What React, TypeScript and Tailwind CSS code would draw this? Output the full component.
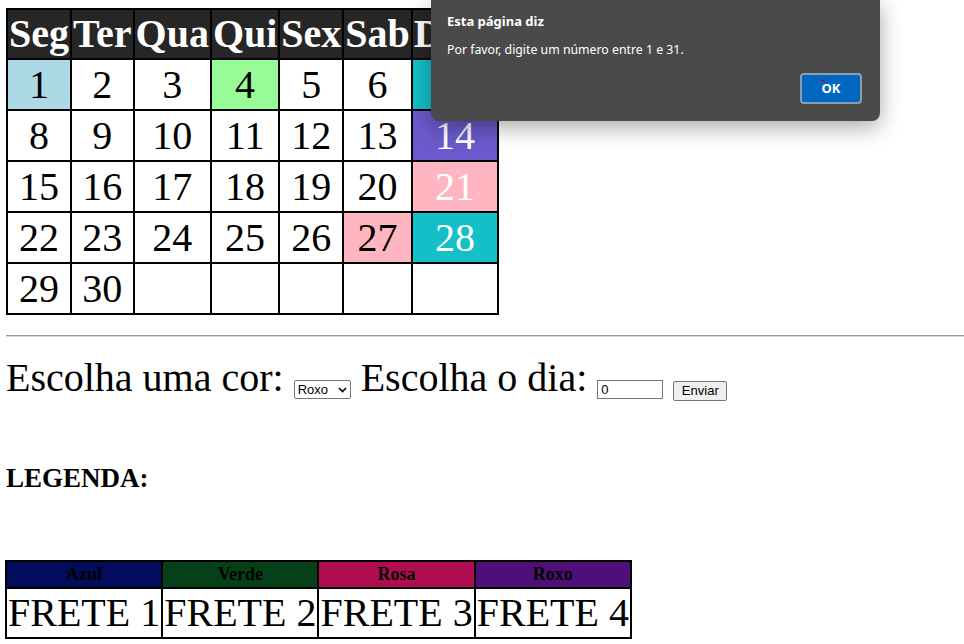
import React from "react";

type Day = { n?: number; bg?: string; fg?: string };

const weekDays = ["Seg", "Ter", "Qua", "Qui", "Sex", "Sab", "Dom"];

const weeks: Day[][] = [
  [
    { n: 1, bg: "bg-[#add8e6]" },
    { n: 2 },
    { n: 3 },
    { n: 4, bg: "bg-[#98fb98]" },
    { n: 5 },
    { n: 6 },
    { n: 7, bg: "bg-[#14bfc7]", fg: "text-white" },
  ],
  [
    { n: 8 },
    { n: 9 },
    { n: 10 },
    { n: 11 },
    { n: 12 },
    { n: 13 },
    { n: 14, bg: "bg-[#6a5acd]", fg: "text-white" },
  ],
  [
    { n: 15 },
    { n: 16 },
    { n: 17 },
    { n: 18 },
    { n: 19 },
    { n: 20 },
    { n: 21, bg: "bg-[#ffb6c1]", fg: "text-white" },
  ],
  [
    { n: 22 },
    { n: 23 },
    { n: 24 },
    { n: 25 },
    { n: 26 },
    { n: 27, bg: "bg-[#ffb6c1]" },
    { n: 28, bg: "bg-[#14bfc7]", fg: "text-white" },
  ],
  [{ n: 29 }, { n: 30 }, {}, {}, {}, {}, {}],
];

const legend = [
  { name: "Azul", bg: "bg-[#030c5b]", frete: "FRETE 1" },
  { name: "Verde", bg: "bg-[#064018]", frete: "FRETE 2" },
  { name: "Rosa", bg: "bg-[#b00c50]", frete: "FRETE 3" },
  { name: "Roxo", bg: "bg-[#4f0f78]", frete: "FRETE 4" },
];

const Calendar = () => (
  <table className="ml-[6px] mt-[8px] text-[40px] leading-[46px]">
    <thead>
      <tr>
        {weekDays.map((d) => (
          <th
            key={d}
            className="border-2 border-black bg-[#262626] p-px font-bold text-white"
          >
            {d}
          </th>
        ))}
      </tr>
    </thead>
    <tbody>
      {weeks.map((week, i) => (
        <tr key={i}>
          {week.map((day, j) => (
            <td
              key={j}
              className={`h-[51px] border-2 border-black p-px text-center ${day.bg ?? "bg-white"} ${day.fg ?? "text-black"}`}
            >
              {day.n}
            </td>
          ))}
        </tr>
      ))}
    </tbody>
  </table>
);

const Controls = () => (
  <p className="mt-[18px] text-[40px] leading-[46px] whitespace-nowrap">
    Escolha uma cor:{" "}
    <span className="inline-flex h-[19px] w-[57px] items-center justify-between rounded-[2px] border border-[#767676] bg-white pl-[3px] pr-[3px] align-[-3px] font-['Liberation_Sans',sans-serif] text-[13px] leading-none">
      Roxo
      <svg width="9" height="6" viewBox="0 0 9 6" fill="none">
        <path d="M1 1l3.5 3.5L8 1" stroke="#000" strokeWidth="1.6" />
      </svg>
    </span>{" "}
    Escolha o dia:{" "}
    <span className="inline-flex h-[19px] w-[66px] items-center border border-[#767676] bg-white pl-[3px] align-[-3px] font-['Liberation_Sans',sans-serif] text-[13px] leading-none">
      0
    </span>{" "}
    <span className="inline-flex h-[20px] w-[54px] items-center justify-center rounded-[2px] border border-[#767676] bg-[#efefef] align-[-4px] font-['Liberation_Sans',sans-serif] text-[13px] leading-none">
      Enviar
    </span>
  </p>
);

const Legend = () => (
  <>
    <h3 className="mt-[62px] text-[27px] font-bold leading-[30px]">LEGENDA:</h3>
    <table className="-ml-px mt-[67px]">
      <thead>
        <tr>
          {legend.map((l) => (
            <th
              key={l.name}
              className={`border-2 border-black p-px text-[18px] font-bold leading-[23px] text-black ${l.bg}`}
            >
              {l.name}
            </th>
          ))}
        </tr>
      </thead>
      <tbody>
        <tr>
          {legend.map((l) => (
            <td
              key={l.name}
              className="border-2 border-black p-px text-[40px] leading-[46px]"
            >
              {l.frete}
            </td>
          ))}
        </tr>
      </tbody>
    </table>
  </>
);

const AlertDialog = () => (
  <div className="absolute left-[431px] top-0 h-[121px] w-[449px] rounded-b-[8px] bg-[#4a4a4a] font-['Noto_Sans',sans-serif] text-white shadow-[0_6px_22px_rgba(0,0,0,0.35)]">
    <div className="pl-[16px] pt-[12px] text-[13px] font-bold leading-[18px]">
      Esta página diz
    </div>
    <div className="mt-[11px] pl-[16px] text-[12.3px] leading-[18px]">
      Por favor, digite um número entre 1 e 31.
    </div>
    <div className="mt-[14px] flex justify-end pr-[18px]">
      <div className="relative flex h-[31px] w-[62px] items-center justify-center rounded-[4px] border-2 border-[#8d9db0] bg-[#0067c0] text-[13px] font-bold">
        OK
        <span className="absolute left-[19px] top-[4px] h-[3px] w-[3px] rounded-full bg-[#e00000]" />
      </div>
    </div>
  </div>
);

export default function App() {
  return (
    <div className="relative h-[644px] overflow-hidden bg-white font-['Liberation_Serif',serif] text-black">
      <Calendar />
      <hr className="ml-[6px] mt-[20px] border-0 border-t border-b border-t-[#9a9a9a] border-b-[#d9d9d9]" />
      <div className="pl-[6px]">
        <Controls />
        <Legend />
      </div>
      <AlertDialog />
    </div>
  );
}
